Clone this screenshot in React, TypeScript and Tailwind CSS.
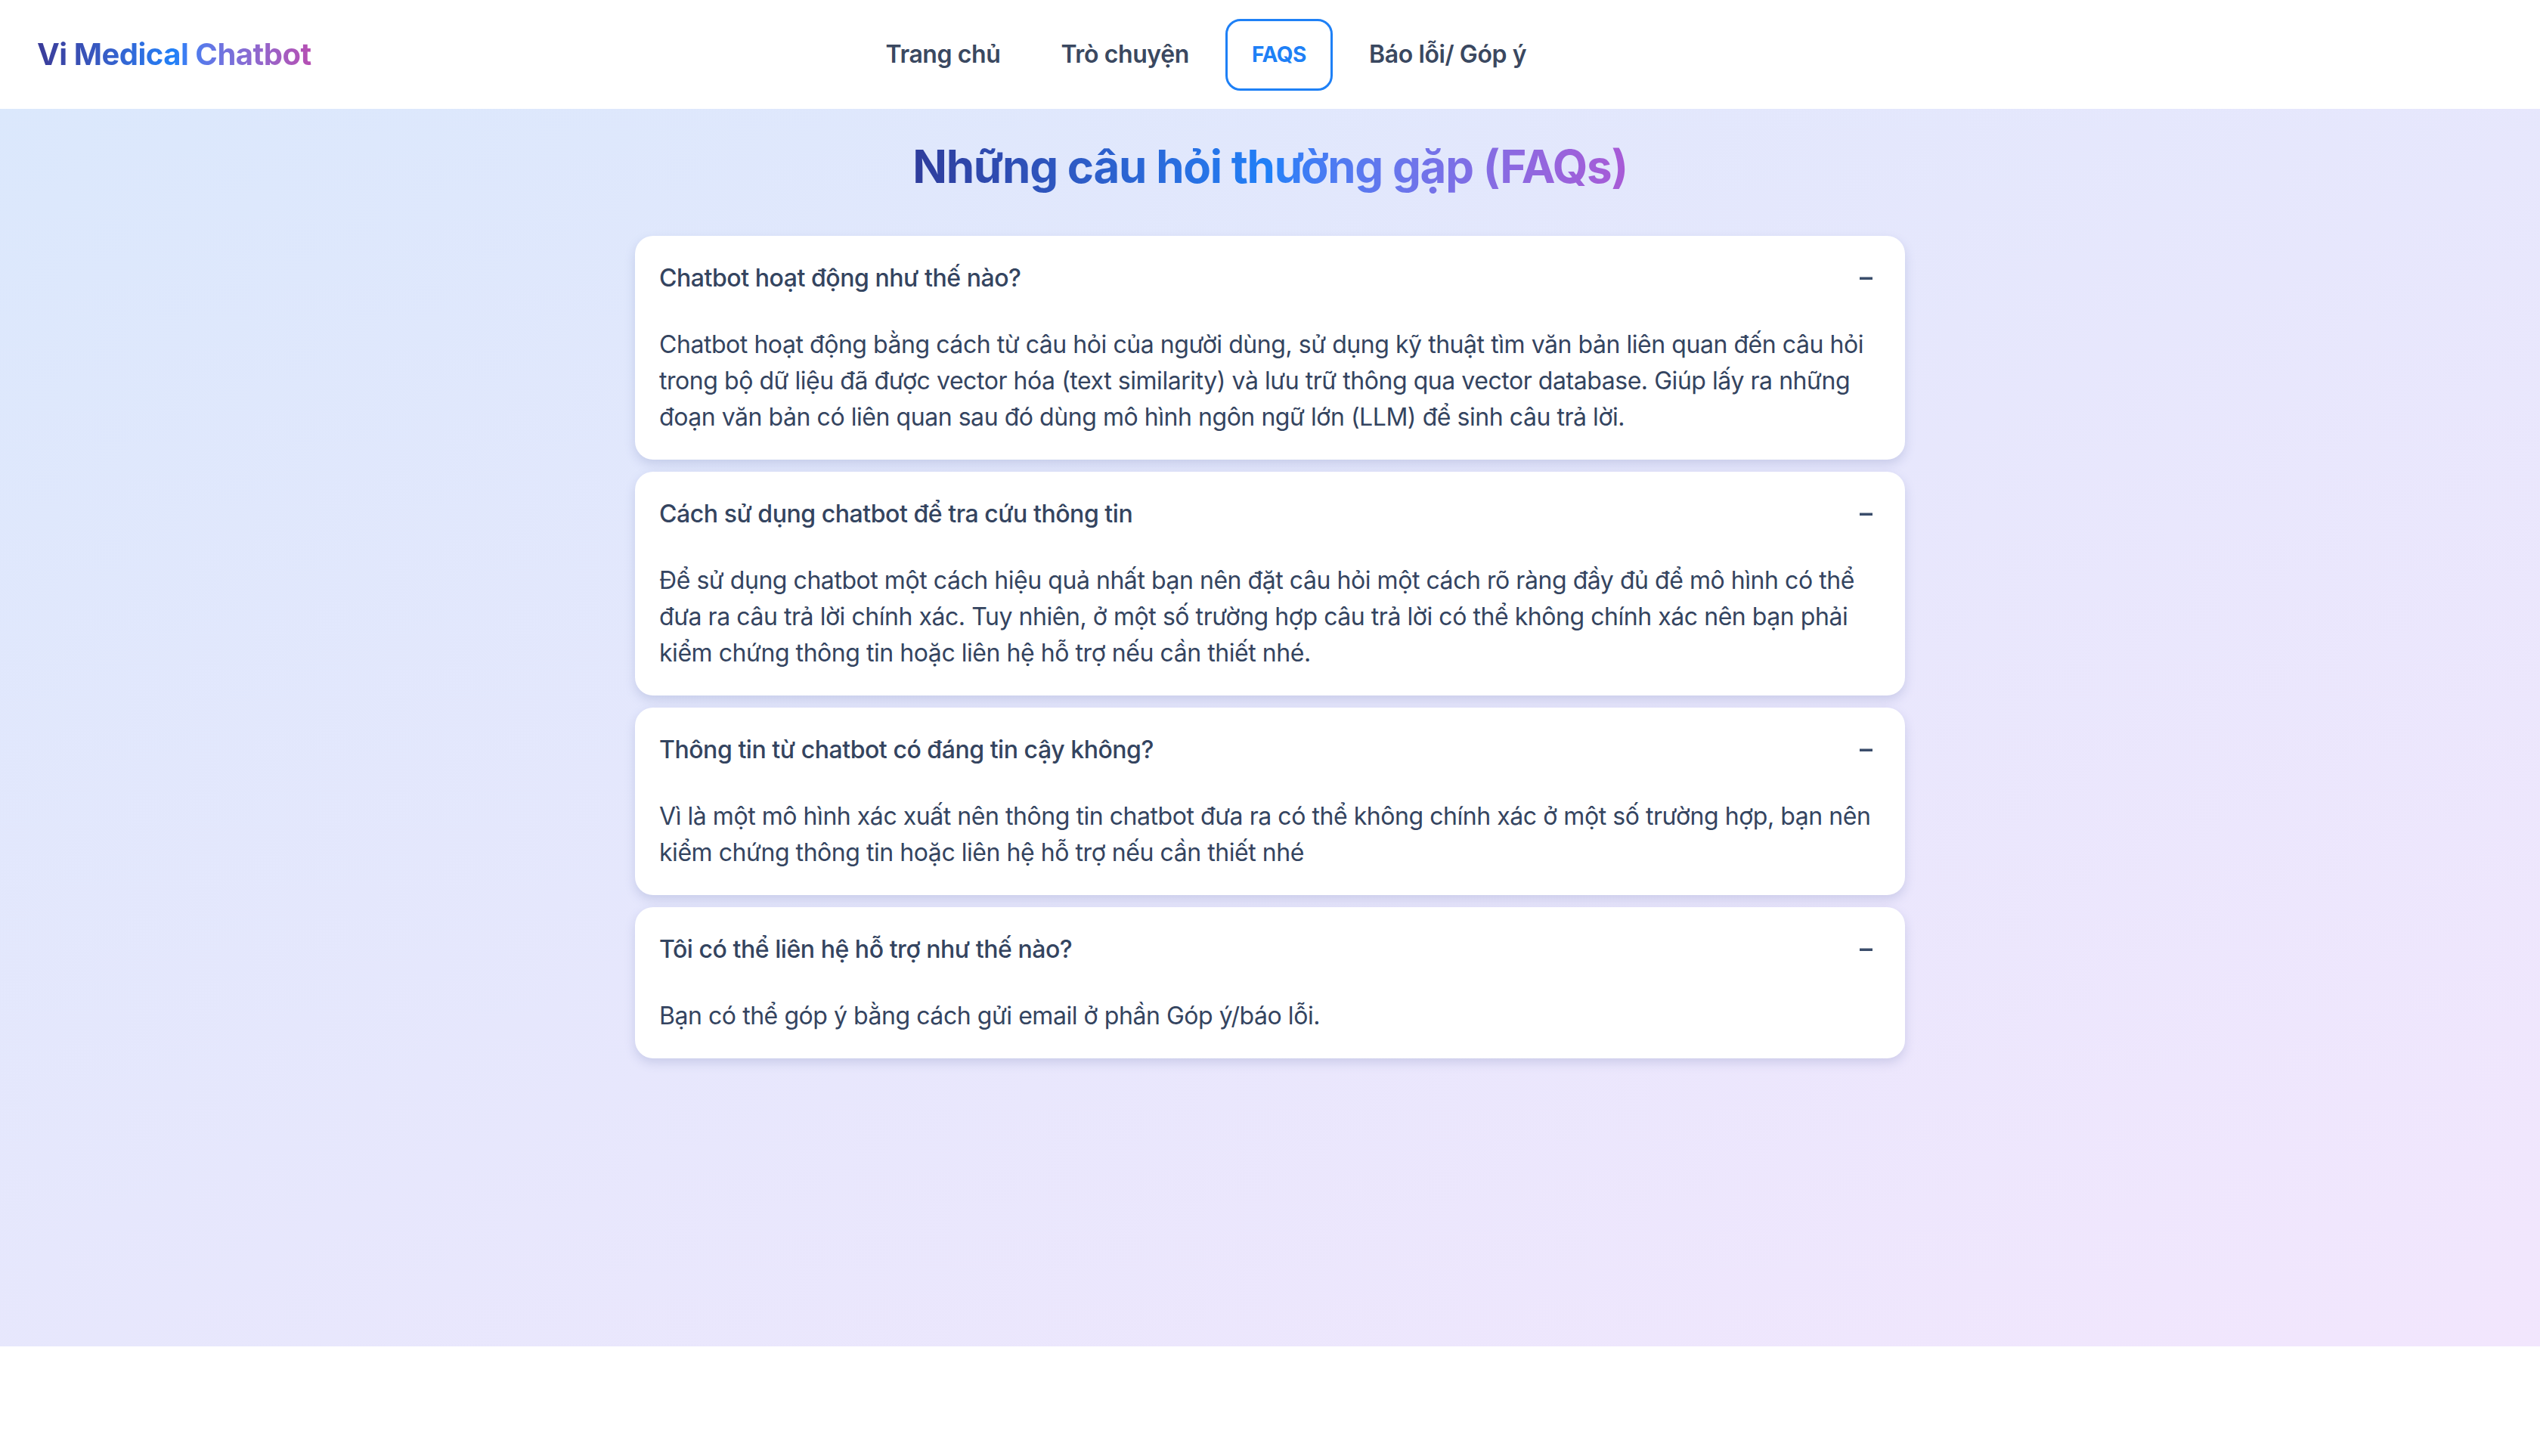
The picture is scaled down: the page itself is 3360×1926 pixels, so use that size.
import { useState } from "react";

const faqs = [
  {
    question: "Chatbot hoạt động như thế nào?",
    answer:
      "Chatbot hoạt động bằng cách từ câu hỏi của người dùng, sử dụng kỹ thuật tìm văn bản liên quan đến câu hỏi trong bộ dữ liệu đã được vector hóa (text similarity) và lưu trữ thông qua vector database. Giúp lấy ra những đoạn văn bản có liên quan sau đó dùng mô hình ngôn ngữ lớn (LLM) để sinh câu trả lời.",
  },
  {
    question: "Cách sử dụng chatbot để tra cứu thông tin",
    answer:
      "Để sử dụng chatbot một cách hiệu quả nhất bạn nên đặt câu hỏi một cách rõ ràng đầy đủ để mô hình có thể đưa ra câu trả lời chính xác. Tuy nhiên, ở một số trường hợp câu trả lời có thể không chính xác nên bạn phải kiểm chứng thông tin hoặc liên hệ hỗ trợ nếu cần thiết nhé.",
  },
  {
    question: "Thông tin từ chatbot có đáng tin cậy không?",
    answer:
      "Vì là một mô hình xác xuất nên thông tin chatbot đưa ra có thể không chính xác ở một số trường hợp, bạn nên kiểm chứng thông tin hoặc liên hệ hỗ trợ nếu cần thiết nhé",
  },
  {
    question: "Tôi có thể liên hệ hỗ trợ như thế nào?",
    answer: "Bạn có thể góp ý bằng cách gửi email ở phần Góp ý/báo lỗi.",
  },
];

const navItems = ["Trang chủ", "Trò chuyện", "FAQS", "Báo lỗi/ Góp ý"];

const FaqItem = ({ question, answer }: { question: string; answer: string }) => {
  const [open, setOpen] = useState(true);
  return (
    <div className="bg-white rounded-[24px] shadow-[0_6px_14px_rgba(96,108,170,0.22)] p-[32px]">
      <button
        onClick={() => setOpen(!open)}
        className="flex items-center justify-between w-full h-[48px] text-left"
      >
        <span className="text-[32px] font-medium tracking-[-0.45px] text-[#34445f]">{question}</span>
        <svg width="18" height="4" viewBox="0 0 18 4" className="mr-[10px]">
          <rect x="0" y="0.5" width="17" height="3.5" fill="#3a4d6b" />
        </svg>
      </button>
      {open && (
        <p className="mt-[40px] text-[32px] leading-[48px] tracking-[-0.45px] text-[#34445f]">
          {answer}
        </p>
      )}
    </div>
  );
};

export default function App() {
  return (
    <div className="w-full bg-white font-['Inter','Noto_Sans',sans-serif]">
      <header className="h-[144px] bg-white flex items-center justify-between px-[49px]">
        <h1 className="text-[40px] font-bold tracking-[-0.5px] bg-linear-to-r from-[#3a3b98] via-[#1f80f8] to-[#b64db2] bg-clip-text text-transparent">
          Vi Medical Chatbot
        </h1>
        <nav className="flex items-center gap-[16px] tracking-[-0.4px]">
          {navItems.map((item) =>
            item === "FAQS" ? (
              <a
                key={item}
                className="h-[95px] px-[32px] flex items-center border-[3px] border-[#1e80f6] rounded-[20px] text-[28px] font-bold text-[#1e80f6]"
              >
                {item}
              </a>
            ) : (
              <a
                key={item}
                className="h-[95px] px-[32px] flex items-center text-[32px] font-semibold text-[#3a4860]"
              >
                {item}
              </a>
            )
          )}
        </nav>
        <div className="w-[532px]"></div>
      </header>

      <main className="min-h-[1637px] bg-linear-to-br from-[#dbe8fc] to-[#f2e6fd] pt-[40px]">
        <div className="flex justify-center mb-[56px]">
          <h2 className="text-[60px] leading-[72px] font-bold tracking-[-1.25px] bg-linear-to-r from-[#2e3c9c] via-[#1f80f8] to-[#a85ad6] bg-clip-text text-transparent">
            Những câu hỏi thường gặp (FAQs)
          </h2>
        </div>
        <div className="w-[1680px] mx-auto flex flex-col gap-[16px]">
          {faqs.map((f) => (
            <FaqItem key={f.question} question={f.question} answer={f.answer} />
          ))}
        </div>
      </main>
    </div>
  );
}
